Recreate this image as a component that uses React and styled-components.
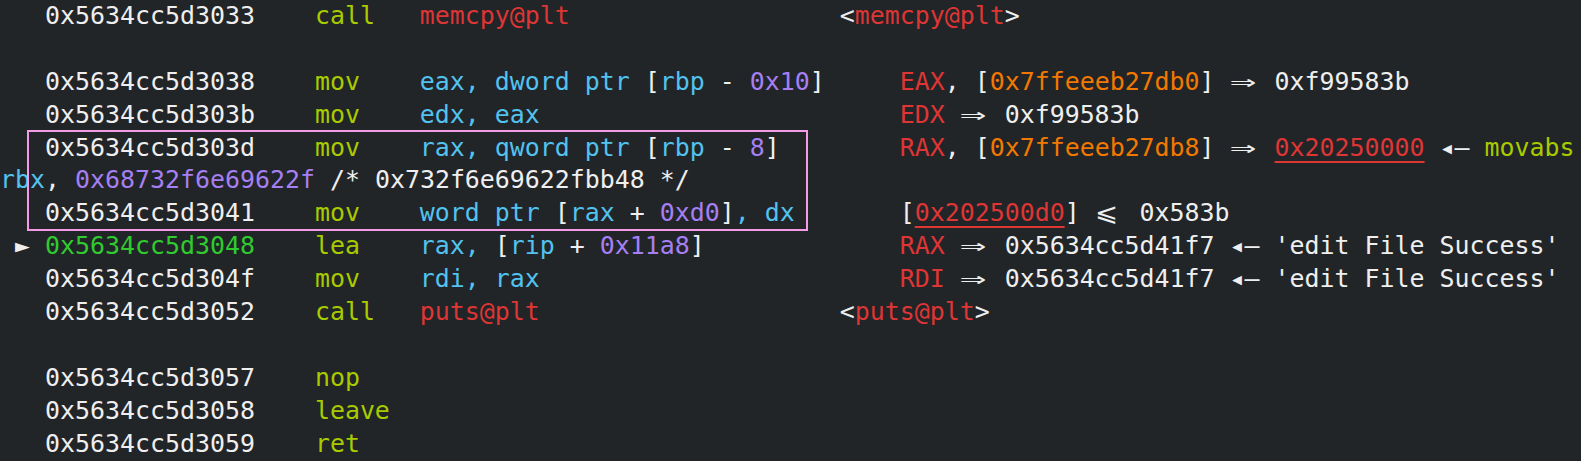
import React from 'react';
import styled, { createGlobalStyle } from 'styled-components';

const Colours = {
    BG: '#222528',
    TEXT: '#efefef',
    MNEMONIC: '#a8cb00',
    REGISTER: '#52c2ef',
    NUMBER: '#a67ff2',
    SYMBOL: '#de3535',
    STACK: '#f27900',
    CURRENT: '#2fcb2f',
    MARK: '#f39be6',
};

const GlobalStyle = createGlobalStyle`
    html, body {
        margin: 0;
        padding: 0;
        background: ${Colours.BG};
    }
`;

const Screen = styled.div`
    background: ${Colours.BG};
    color: ${Colours.TEXT};
    font-family: 'DejaVu Sans Mono', 'Liberation Mono', monospace;
    font-size: 24.92px;
    height: 461px;
    overflow: hidden;
    position: relative;
    width: 1581px;
`;

const Line = styled.div`
    height: 32.9px;
    line-height: 32.9px;
    white-space: pre;
`;

const Cell = styled.span`
    display: inline-block;
    white-space: pre;
    width: ${(p) => (p.$cols ? `${p.$cols}ch` : 'auto')};
`;

const Tok = styled.span`
    color: ${(p) => p.$c};
    text-decoration: ${(p) => (p.$u ? 'underline' : 'none')};
    text-decoration-thickness: 2px;
    text-underline-offset: 5px;
`;

const Glyph = styled.span`
    color: ${(p) => p.$c};
    display: inline-block;
    text-align: left;
    width: ${(p) => p.$w}ch;

    & > span {
        display: inline-block;
        transform: scaleX(${(p) => p.$sx ?? 1});
        transform-origin: left center;
    }
`;

// the pink box someone drew over the screenshot
const Highlight = styled.div`
    border: 2px solid ${Colours.MARK};
    height: 97px;
    left: 27px;
    pointer-events: none;
    position: absolute;
    top: 130px;
    width: 777px;
`;

const K = {
    w: Colours.TEXT,
    y: Colours.MNEMONIC,
    c: Colours.REGISTER,
    p: Colours.NUMBER,
    r: Colours.SYMBOL,
    o: Colours.STACK,
};

// [colourKey, text, underline?] or ['g', glyph, width, scaleX]
const arrow = ['g', '\u21d2', 2, 1.75];
const leftTri = [['g', '\u25c2', 1], ['g', '\u2014', 1]];
const str = "'edit File Success'";

const rows = [
    {
        addr: '0x5634cc5d3033',
        op: 'call',
        args: [['r', 'memcpy@plt']],
        noteCol: 56,
        note: [['w', '<'], ['r', 'memcpy@plt'], ['w', '>']],
    },
    null,
    {
        addr: '0x5634cc5d3038',
        op: 'mov',
        args: [['c', 'eax, dword ptr '], ['w', '['], ['c', 'rbp'], ['w', ' - '], ['p', '0x10'], ['w', ']']],
        note: [['r', 'EAX'], ['w', ', ['], ['o', '0x7ffeeeb27db0'], ['w', '] '], arrow, ['w', ' 0xf99583b']],
    },
    {
        addr: '0x5634cc5d303b',
        op: 'mov',
        args: [['c', 'edx, eax']],
        note: [['r', 'EDX'], ['w', ' '], arrow, ['w', ' 0xf99583b']],
    },
    {
        addr: '0x5634cc5d303d',
        op: 'mov',
        args: [['c', 'rax, qword ptr '], ['w', '['], ['c', 'rbp'], ['w', ' - '], ['p', '8'], ['w', ']']],
        note: [
            ['r', 'RAX'], ['w', ', ['], ['o', '0x7ffeeeb27db8'], ['w', '] '], arrow, ['w', ' '],
            ['r', '0x20250000', true], ['w', ' '], ...leftTri, ['w', ' '], ['y', 'movabs'],
        ],
    },
    {
        raw: [['c', 'rbx'], ['w', ', '], ['p', '0x68732f6e69622f'], ['w', ' /* 0x732f6e69622fbb48 */']],
    },
    {
        addr: '0x5634cc5d3041',
        op: 'mov',
        args: [['c', 'word ptr '], ['w', '['], ['c', 'rax'], ['w', ' + '], ['p', '0xd0'], ['w', ']'], ['c', ', dx']],
        note: [['w', '['], ['r', '0x202500d0', true], ['w', '] '], ['g', '\u2a7d', 2, 1.1], ['w', ' 0x583b']],
    },
    {
        current: true,
        addr: '0x5634cc5d3048',
        op: 'lea',
        args: [['c', 'rax, '], ['w', '['], ['c', 'rip'], ['w', ' + '], ['p', '0x11a8'], ['w', ']']],
        note: [['r', 'RAX'], ['w', ' '], arrow, ['w', ' 0x5634cc5d41f7 '], ...leftTri, ['w', ` ${str}`]],
    },
    {
        addr: '0x5634cc5d304f',
        op: 'mov',
        args: [['c', 'rdi, rax']],
        note: [['r', 'RDI'], ['w', ' '], arrow, ['w', ' 0x5634cc5d41f7 '], ...leftTri, ['w', ` ${str}`]],
    },
    {
        addr: '0x5634cc5d3052',
        op: 'call',
        args: [['r', 'puts@plt']],
        noteCol: 56,
        note: [['w', '<'], ['r', 'puts@plt'], ['w', '>']],
    },
    null,
    { addr: '0x5634cc5d3057', op: 'nop' },
    { addr: '0x5634cc5d3058', op: 'leave' },
    { addr: '0x5634cc5d3059', op: 'ret' },
];

function Segments({ parts }) {
    return parts.map(([key, text, extra, sx], i) =>
        key === 'g' ? (
            <Glyph key={i} $w={extra} $sx={sx} $c={Colours.TEXT}>
                <span>{text}</span>
            </Glyph>
        ) : (
            <Tok key={i} $c={K[key]} $u={extra}>
                {text}
            </Tok>
        ),
    );
}

function DisasmLine({ row }) {
    if (!row) return <Line> </Line>;
    if (row.raw) {
        return (
            <Line>
                <Segments parts={row.raw} />
            </Line>
        );
    }
    const noteCol = row.noteCol ?? 60;
    return (
        <Line>
            <Cell $cols={3}>
                {row.current ? (
                    <Tok $c={Colours.TEXT}>{' \u25ba '}</Tok>
                ) : (
                    '   '
                )}
            </Cell>
            <Cell $cols={18}>
                <Tok $c={row.current ? Colours.CURRENT : Colours.TEXT}>{row.addr}</Tok>
            </Cell>
            <Cell $cols={7}>
                <Tok $c={Colours.MNEMONIC}>{row.op}</Tok>
            </Cell>
            {row.args ? (
                <Cell $cols={noteCol - 28}>
                    <Segments parts={row.args} />
                </Cell>
            ) : null}
            {row.note ? (
                <Cell>
                    <Segments parts={row.note} />
                </Cell>
            ) : null}
        </Line>
    );
}

export default function App() {
    return (
        <>
            <GlobalStyle />
            <Screen>
                {rows.map((row, i) => (
                    <DisasmLine key={i} row={row} />
                ))}
                <Highlight />
            </Screen>
        </>
    );
}
